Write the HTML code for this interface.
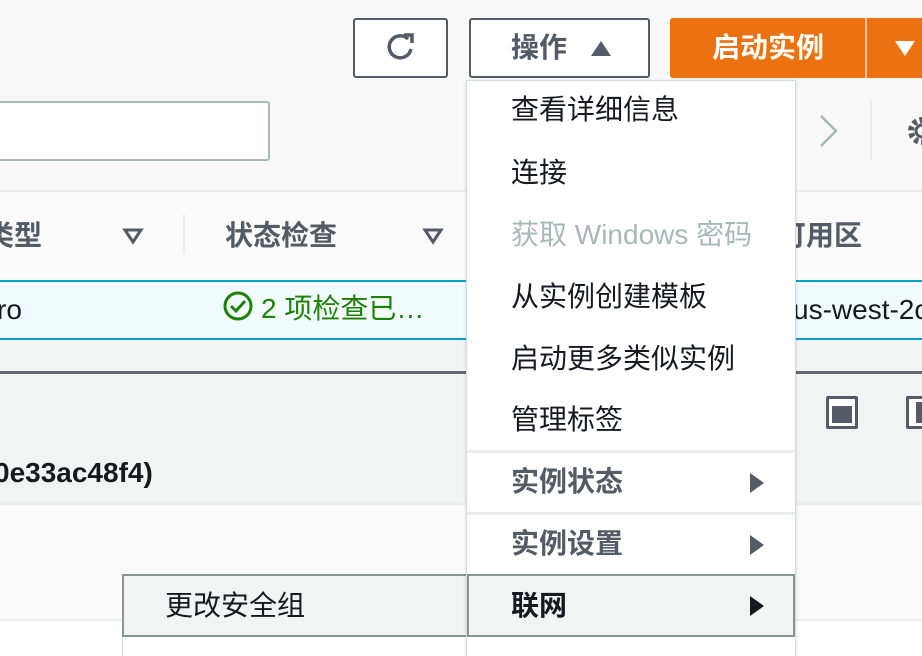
<!DOCTYPE html>
<html style="overflow:hidden;height:656px"><head><meta charset="utf-8"><style>
*{margin:0;padding:0;box-sizing:border-box}
body{width:922px;height:656px;overflow:hidden;position:relative;background:#fff;font-family:"Liberation Sans","Noto Sans CJK SC",sans-serif;color:#16191f}
.a{position:absolute}
.t{font-size:28px;white-space:nowrap;line-height:1}
</style></head><body>
<div class="a" style="left:0;top:0;width:922px;height:192px;background:#f8f8f8"></div>
<div class="a" style="left:0;top:190px;width:922px;height:2px;background:#eaeded"></div>
<div class="a" style="left:0;top:192px;width:922px;height:88px;background:#fafafa"></div>
<div class="a" style="left:0;top:280px;width:922px;height:60px;background:#f1faff;border-top:2px solid #00a1c9;border-bottom:2px solid #00a1c9"></div>
<div class="a" style="left:0;top:340px;width:922px;height:163px;background:#f2f3f3"></div>
<div class="a" style="left:0;top:371px;width:922px;height:3px;background:#545b64;opacity:.9"></div>
<div class="a" style="left:0;top:502px;width:922px;height:3px;background:#eaeded"></div>
<div class="a" style="left:0;top:505px;width:922px;height:115px;background:#fafafa"></div>
<div class="a" style="left:0;top:619px;width:922px;height:2px;background:#eaeded"></div>

<div class="a" style="left:353px;top:18px;width:95px;height:60px;border:2px solid #545b64;border-radius:3px;background:#fff"></div>
<svg class="a" style="left:384px;top:30px" width="34" height="36" viewBox="0 0 34 36"><path d="M24 9 A11 11 0 1 0 27 19" fill="none" stroke="#545b64" stroke-width="3.5"/><path d="M20 5 L28 5 L28 13" fill="none" stroke="#545b64" stroke-width="3.5"/></svg>
<div class="a" style="left:469px;top:18px;width:181px;height:60px;border:2px solid #545b64;border-radius:3px;background:#fff"></div>
<div class="a t" style="left:511px;top:34px;font-weight:bold;color:#545b64">操作</div>
<svg class="a" style="left:590px;top:40px" width="22" height="18"><path d="M11 1 L21 16 L1 16Z" fill="#545b64"/></svg>
<div class="a" style="left:670px;top:18px;width:252px;height:60px;background:#ec7211;border-radius:3px 0 0 3px"></div>
<div class="a" style="left:865px;top:18px;width:2px;height:60px;background:#f7c9a0"></div>
<div class="a t" style="left:712px;top:34px;font-weight:bold;color:#fff">启动实例</div>
<svg class="a" style="left:894px;top:40px" width="22" height="18"><path d="M1 1 L21 1 L11 16Z" fill="#fff"/></svg>

<div class="a" style="left:-10px;top:101px;width:280px;height:60px;border:2px solid #aab7b8;border-radius:3px;background:#fff"></div>
<svg class="a" style="left:818px;top:114px" width="22" height="34"><path d="M3 2 L18 17 L3 32" fill="none" stroke="#aab7b8" stroke-width="2.5"/></svg>
<div class="a" style="left:870px;top:100px;width:2px;height:60px;background:#eaeded"></div>
<svg class="a" style="left:904px;top:114px" width="18" height="34"><circle cx="18" cy="17" r="11" fill="none" stroke="#545b64" stroke-width="6" stroke-dasharray="4 3"/><circle cx="18" cy="17" r="6" fill="none" stroke="#545b64" stroke-width="3"/></svg>

<div class="a t" style="left:-14px;top:222px;font-weight:bold;color:#545b64">类型</div>
<svg class="a" style="left:122px;top:227px" width="22" height="18"><path d="M3 3 L19 3 L11 15Z" fill="none" stroke="#545b64" stroke-width="3"/></svg>
<div class="a" style="left:183px;top:214px;width:2px;height:40px;background:#eaeded"></div>
<div class="a t" style="left:225px;top:222px;font-weight:bold;color:#545b64">状态检查</div>
<svg class="a" style="left:422px;top:227px" width="22" height="18"><path d="M3 3 L19 3 L11 15Z" fill="none" stroke="#545b64" stroke-width="3"/></svg>
<div class="a t" style="left:778px;top:222px;font-weight:bold;color:#545b64">可用区</div>

<div class="a t" style="left:-3px;top:296px;color:#16191f">ro</div>
<svg class="a" style="left:222px;top:290px" width="32" height="32"><circle cx="16" cy="16" r="13" fill="none" stroke="#1d8102" stroke-width="3"/><path d="M9 16 L14 21 L23 11" fill="none" stroke="#1d8102" stroke-width="3"/></svg>
<div class="a t" style="left:261px;top:295px;color:#1d8102">2 项检查已…</div>
<div class="a t" style="left:793px;top:296px;width:129px;overflow:hidden">us-west-2c</div>

<div class="a t" style="left:-6px;top:459px;font-weight:bold">0e33ac48f4)</div>
<div class="a" style="left:826px;top:396px;width:32px;height:33px;border:3px solid #545b64;border-radius:2px;background:#fff"><div style="margin:7px 3px 3px;height:17px;background:#545b64"></div></div>
<div class="a" style="left:906px;top:396px;width:16px;height:33px;border:3px solid #545b64;border-right:0;border-radius:2px 0 0 2px;background:#fff"><div style="margin:3px 0 3px 7px;height:21px;background:#545b64"></div></div>

<div class="a" style="left:122px;top:574px;width:348px;height:82px;background:#fff;border:1px solid #d5dbdb;border-bottom:0"></div>
<div class="a" style="left:122px;top:574px;width:348px;height:63px;background:#f2f3f3;border:2px solid #879596"></div>
<div class="a t" style="left:165px;top:592px">更改安全组</div>

<div class="a" style="left:466px;top:80px;width:330px;height:576px;background:#fff;border:1px solid #d5dbdb;border-bottom:0;box-shadow:0 1px 3px rgba(0,0,0,.15)"></div>
<div class="a t" style="left:511px;top:96px">查看详细信息</div>
<div class="a t" style="left:511px;top:159px">连接</div>
<div class="a t" style="left:511px;top:221px;color:#aab7b8">获取 Windows 密码</div>
<div class="a t" style="left:511px;top:283px">从实例创建模板</div>
<div class="a t" style="left:511px;top:345px">启动更多类似实例</div>
<div class="a t" style="left:511px;top:406px">管理标签</div>
<div class="a" style="left:467px;top:450px;width:328px;height:3px;background:#eaeded"></div>
<div class="a t" style="left:511px;top:468px;font-weight:bold;color:#545b64">实例状态</div>
<svg class="a" style="left:748px;top:472px" width="18" height="22"><path d="M2 1 L16 11 L2 21Z" fill="#545b64"/></svg>
<div class="a" style="left:467px;top:512px;width:328px;height:3px;background:#eaeded"></div>
<div class="a t" style="left:511px;top:530px;font-weight:bold;color:#545b64">实例设置</div>
<svg class="a" style="left:748px;top:534px" width="18" height="22"><path d="M2 1 L16 11 L2 21Z" fill="#545b64"/></svg>
<div class="a" style="left:467px;top:574px;width:328px;height:63px;background:#f2f3f3;border:2px solid #879596"></div>
<div class="a t" style="left:511px;top:592px;font-weight:bold">联网</div>
<svg class="a" style="left:748px;top:595px" width="18" height="22"><path d="M2 1 L16 11 L2 21Z" fill="#16191f"/></svg>
</body></html>
